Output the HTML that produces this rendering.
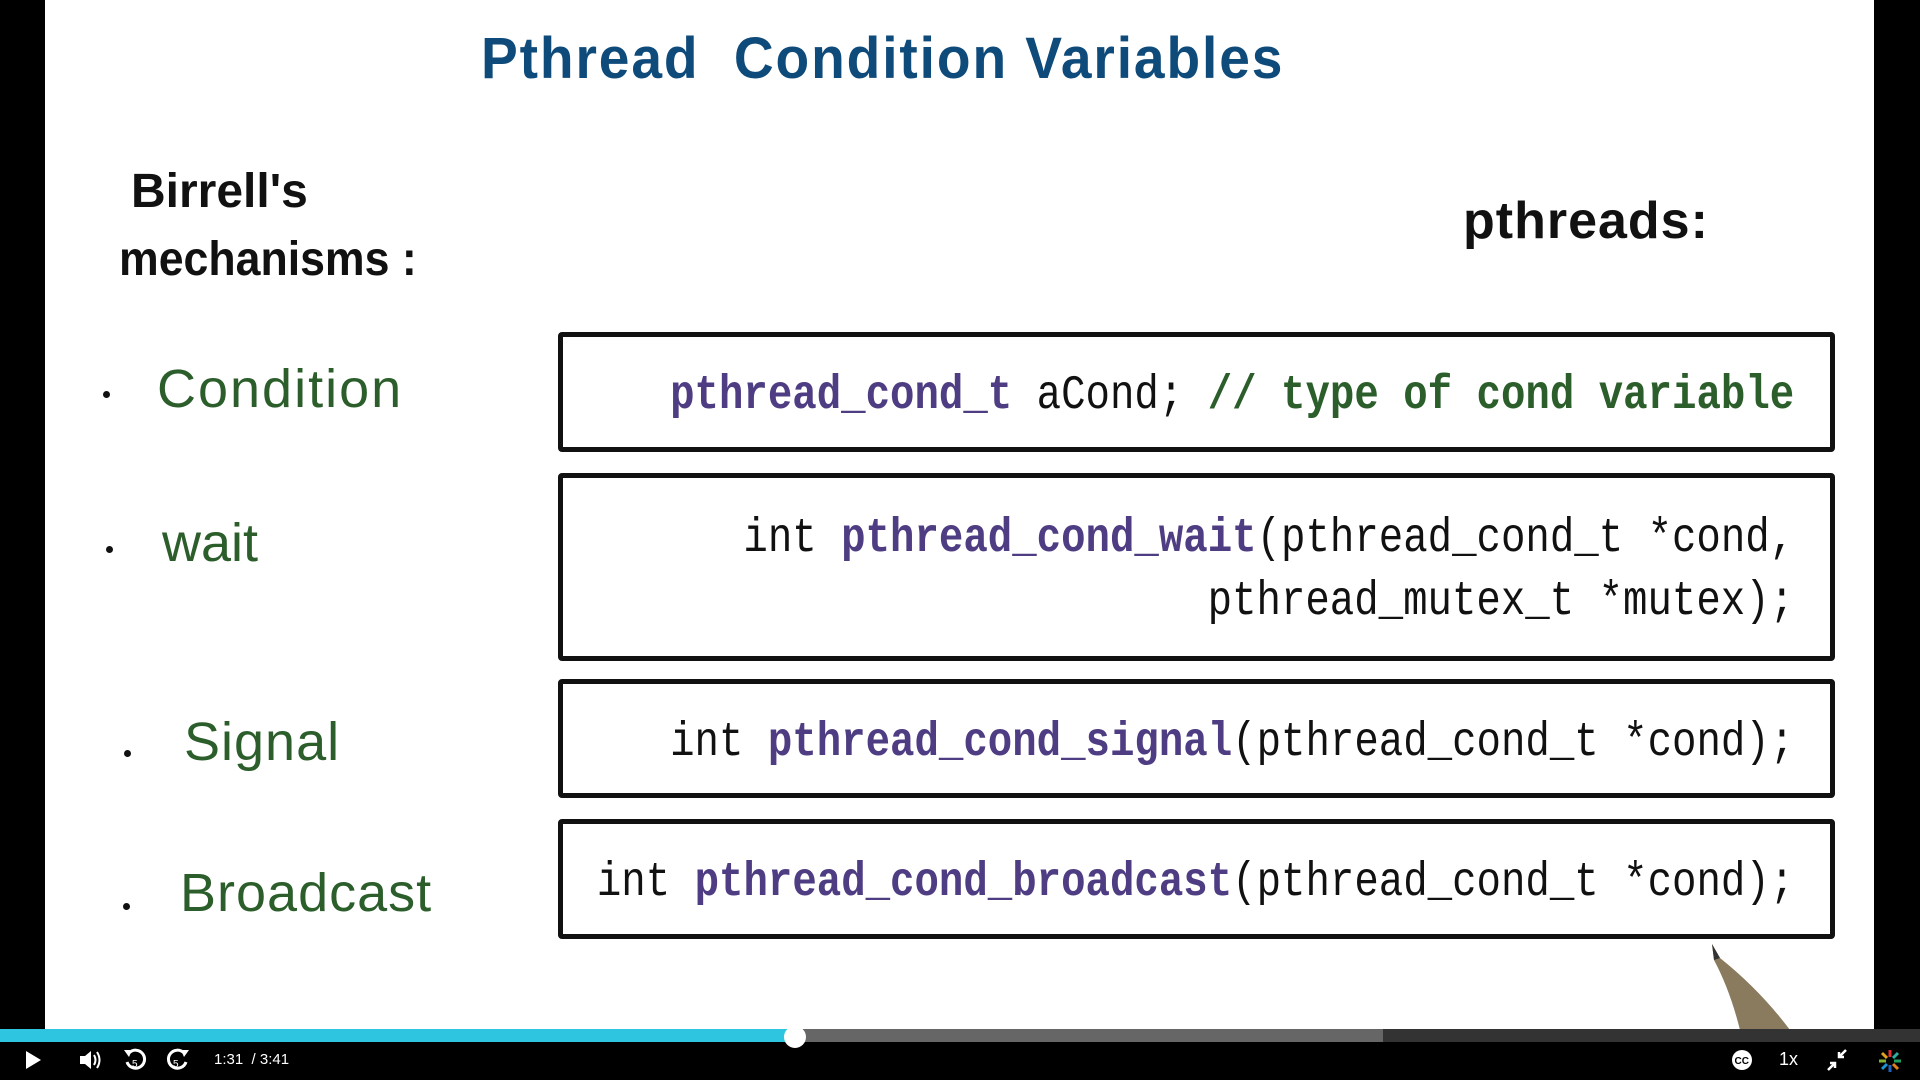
<!DOCTYPE html>
<html><head><meta charset="utf-8"><style>
*{margin:0;padding:0;box-sizing:border-box}
body{width:1920px;height:1080px;background:#000;position:relative;overflow:hidden;font-family:"Liberation Sans",sans-serif}
.slide{position:absolute;left:45px;top:0;width:1829px;height:1030px;background:#fff}
.hw{position:absolute;white-space:nowrap;font-family:"Liberation Sans",sans-serif;font-weight:bold;line-height:1}
.box{position:absolute;left:558px;width:1277px;border:5px solid #111;border-radius:4px;background:#fff}
.code{position:absolute;right:36px;font-family:"Liberation Mono",monospace;font-size:40px;color:#111;white-space:nowrap;line-height:1;transform:scale(1.018,1.2);transform-origin:right center}
.p{color:#4e3d82;font-weight:bold}
.g{color:#2b5e2b;font-weight:bold}
.dot{position:absolute;width:7px;height:7px;border-radius:50%;background:#111}
.ctl{position:absolute;color:#fff;font-size:15px}
</style></head><body>
<div class="slide"></div>
<div class="hw" style="left:481px;top:30px;font-size:58px;color:#0e4a7a;letter-spacing:2px;transform:scaleX(0.95);transform-origin:left">Pthread &nbsp;Condition Variables</div>
<div class="hw" style="left:131px;top:168px;font-size:48px;color:#111">Birrell's</div>
<div class="hw" style="left:119px;top:236px;font-size:48px;color:#111;transform:scaleX(0.93);transform-origin:left">mechanisms :</div>
<div class="hw" style="left:1463px;top:195px;font-size:52px;color:#111;letter-spacing:1px">pthreads:</div>

<div class="dot" style="left:103px;top:391px"></div>
<div class="hw" style="left:157px;top:362px;font-size:54px;color:#2b5e2b;font-weight:normal;letter-spacing:2px">Condition</div>
<div class="dot" style="left:106px;top:546px"></div>
<div class="hw" style="left:162px;top:516px;font-size:54px;color:#2b5e2b;font-weight:normal">wait</div>
<div class="dot" style="left:124px;top:750px"></div>
<div class="hw" style="left:184px;top:715px;font-size:54px;color:#2b5e2b;font-weight:normal;letter-spacing:1px">Signal</div>
<div class="dot" style="left:123px;top:903px"></div>
<div class="hw" style="left:180px;top:866px;font-size:54px;color:#2b5e2b;font-weight:normal;letter-spacing:1px">Broadcast</div>

<div class="box" style="top:332px;height:120px"><div class="code" style="top:40px"><span class="p">pthread_cond_t</span> aCond; <span class="g">// type of cond variable</span></div></div>
<div class="box" style="top:473px;height:188px"><div class="code" style="top:42px">int <span class="p">pthread_cond_wait</span>(pthread_cond_t *cond,</div><div class="code" style="top:105px">pthread_mutex_t *mutex);</div></div>
<div class="box" style="top:679px;height:119px"><div class="code" style="top:40px">int <span class="p">pthread_cond_signal</span>(pthread_cond_t *cond);</div></div>
<div class="box" style="top:819px;height:120px"><div class="code" style="top:40px">int <span class="p">pthread_cond_broadcast</span>(pthread_cond_t *cond);</div></div>

<svg style="position:absolute;left:1700px;top:940px" width="120" height="90"><path d="M12 4 L20 18 Q60 50 90 90 L40 90 Q30 50 14 20 Z" fill="#8a7a5e"/><path d="M12 4 L20 18 L14 20Z" fill="#333"/></svg>

<div style="position:absolute;left:0;top:1029px;width:1920px;height:13px;background:#333"></div>
<div style="position:absolute;left:0;top:1029px;width:1383px;height:13px;background:#666"></div>
<div style="position:absolute;left:0;top:1029px;width:795px;height:13px;background:#2ec5e0"></div>
<div style="position:absolute;left:784px;top:1026px;width:22px;height:22px;border-radius:50%;background:#fff"></div>

<svg style="position:absolute;left:24px;top:1050px" width="20" height="20"><path d="M2 1 L17 10 L2 19Z" fill="#fff"/></svg>
<svg style="position:absolute;left:78px;top:1048px" width="24" height="24"><path d="M2 8 H7 L13 3 V21 L7 16 H2Z" fill="#fff"/><path d="M16 7 Q19 12 16 17 M19 4 Q24 12 19 20" stroke="#fff" stroke-width="2" fill="none"/></svg>
<svg style="position:absolute;left:122px;top:1046px" width="26" height="26"><path d="M7 7 A9 9 0 1 1 5 16" stroke="#fff" stroke-width="3" fill="none"/><path d="M2 4 L10 4 L7 11Z" fill="#fff"/><text x="10" y="21" font-size="10" fill="#fff" font-family="Liberation Sans">5</text></svg>
<svg style="position:absolute;left:165px;top:1046px" width="26" height="26"><path d="M19 7 A9 9 0 1 0 21 16" stroke="#fff" stroke-width="3" fill="none"/><path d="M24 4 L16 4 L19 11Z" fill="#fff"/><text x="8" y="21" font-size="10" fill="#fff" font-family="Liberation Sans">5</text></svg>
<div class="ctl" style="left:214px;top:1051px">1:31 &nbsp;/ 3:41</div>
<svg style="position:absolute;left:1731px;top:1049px" width="22" height="22"><circle cx="11" cy="11" r="10" fill="#fff"/><text x="3.5" y="15" font-size="10" font-weight="bold" fill="#000" font-family="Liberation Sans">CC</text></svg>
<div class="ctl" style="left:1779px;top:1049px;font-size:18px">1x</div>
<svg style="position:absolute;left:1826px;top:1048px" width="22" height="24"><path d="M20 2 L13 9 M13 4 V9 H18 M2 22 L9 15 M4 15 H9 V20" stroke="#fff" stroke-width="2.5" fill="none"/></svg>
<svg style="position:absolute;left:1878px;top:1049px" width="24" height="24"><g stroke-width="3"><line x1="12" y1="1" x2="12" y2="8" stroke="#e03030"/><line x1="12" y1="16" x2="12" y2="23" stroke="#2060c0"/><line x1="1" y1="12" x2="8" y2="12" stroke="#80b030"/><line x1="16" y1="12" x2="23" y2="12" stroke="#20a060"/><line x1="4" y1="4" x2="9" y2="9" stroke="#e0a020"/><line x1="15" y1="15" x2="20" y2="20" stroke="#e08020"/><line x1="20" y1="4" x2="15" y2="9" stroke="#30b0a0"/><line x1="4" y1="20" x2="9" y2="15" stroke="#2090d0"/></g></svg>
</body></html>
